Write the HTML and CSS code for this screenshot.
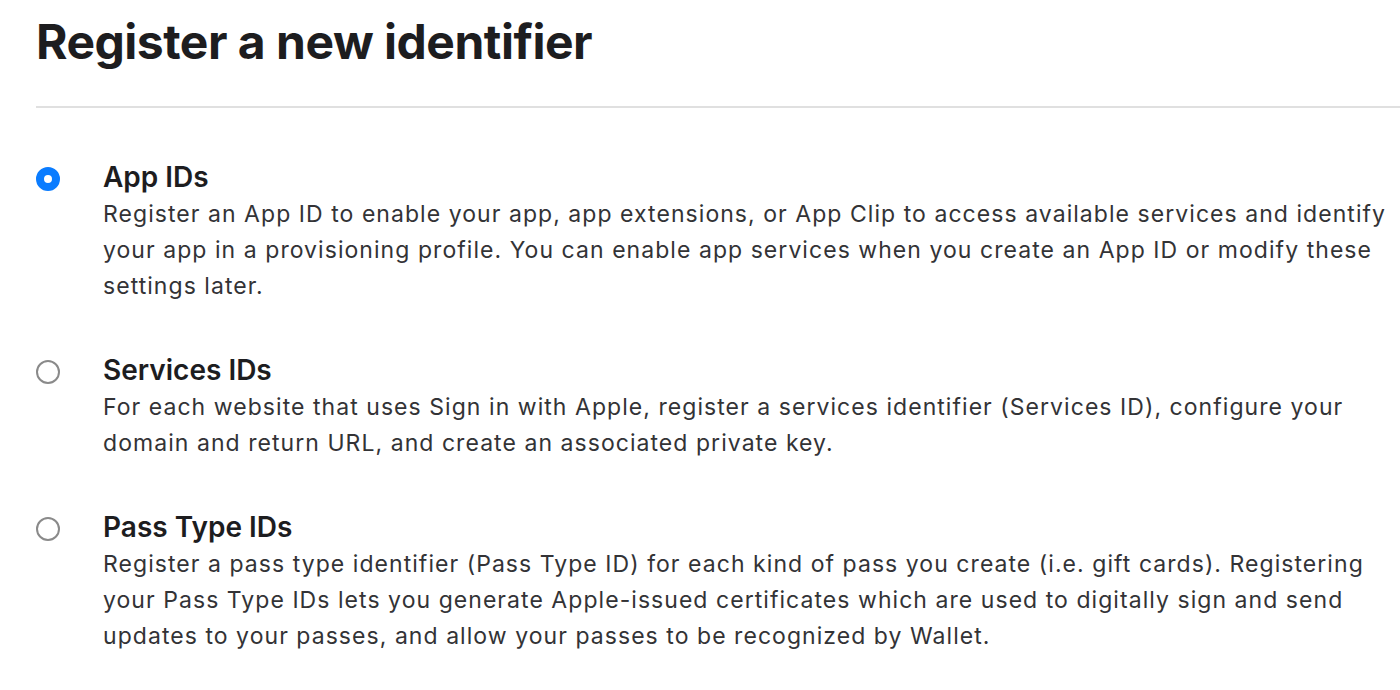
FILE: index.html
```html
<!DOCTYPE html>
<html lang="en">
<head>
    <meta charset="UTF-8">
    <meta name="viewport" content="width=device-width, initial-scale=1.0">
    <title>Register a new identifier</title>
    <link rel="stylesheet" href="styles.css">
</head>
<body>
<div class="page">
  <h1 class="title">Register a new identifier</h1>
  <hr class="divider">

  <div class="choices">
    <label class="choice">
      <input type="radio" name="kind" value="app" checked>
      <div class="choice-text">
        <div class="choice-name">App IDs</div>
        <p class="choice-desc">Register an App ID to enable your app, app extensions, or App Clip to access available services and identify your app in a provisioning profile. You can enable app services when you create an App ID or modify these settings later.</p>
      </div>
    </label>

    <label class="choice">
      <input type="radio" name="kind" value="services">
      <div class="choice-text">
        <div class="choice-name">Services IDs</div>
        <p class="choice-desc">For each website that uses Sign in with Apple, register a services identifier (Services ID), configure your domain and return URL, and create an associated private key.</p>
      </div>
    </label>

    <label class="choice">
      <input type="radio" name="kind" value="pass">
      <div class="choice-text">
        <div class="choice-name">Pass Type IDs</div>
        <p class="choice-desc">Register a pass type identifier (Pass Type ID) for each kind of pass you create (i.e. gift cards). Registering your Pass Type IDs lets you generate Apple-issued certificates which are used to digitally sign and send updates to your passes, and allow your passes to be recognized by Wallet.</p>
      </div>
    </label>
  </div>
</div>
</body>
</html>
```

FILE: styles.css
```css
html, body {
  margin: 0;
  padding: 0;
  background: #fff;
  overflow: hidden;
}

body {
  font-family: Inter, "Noto Sans", sans-serif;
  color: #1d1d1f;
}

.page {
  padding: 0 0 0 36px;
}

.title {
  margin: 0;
  padding-top: 12px;
  font-size: 48px;
  line-height: 60px;
  font-weight: 700;
  letter-spacing: -0.5px;
}

.divider {
  margin: 34px 0 0 0;
  border: none;
  border-top: 2px solid #e0e0e0;
  height: 0;
}

.choices {
  padding-top: 51px;
}

.choice {
  display: flex;
  align-items: flex-start;
  margin-bottom: 48px;
  cursor: pointer;
}

/* radio drawn by hand so the ring and dot look like the native macOS one */
.choice input {
  -webkit-appearance: none;
  appearance: none;
  flex: none;
  width: 24px;
  height: 24px;
  margin: 8px 43px 0 0;
  border: 2px solid #8a8a8a;
  border-radius: 50%;
  box-sizing: border-box;
  background: #fff;
}

.choice input:checked {
  border: 8px solid #0a7cff;
  background: #fff;
}

.choice-name {
  font-size: 28px;
  line-height: 36px;
  font-weight: 600;
}

.choice-desc {
  margin: 0;
  padding-top: 1px;
  font-size: 23px;
  line-height: 36px;
  letter-spacing: 1.05px;
  color: #333336;
}
```
